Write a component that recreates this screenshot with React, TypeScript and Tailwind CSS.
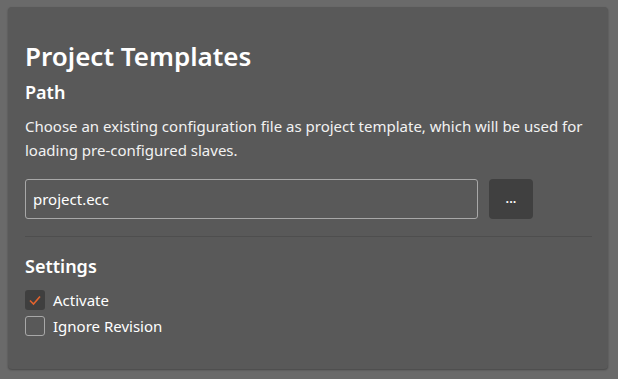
import { useState } from "react";

export default function App() {
  const [active, setActive] = useState(true);
  const [ignoreRev, setIgnoreRev] = useState(false);

  return (
    <main
      className="w-[618px] h-[379px] bg-[#6a6a6a] pt-[7px] px-[8px] text-white"
      style={{ fontFamily: '"Noto Sans", "Open Sans", sans-serif' }}
    >
      <div className="w-[600px] h-[362px] rounded-[4px] bg-[#595959] shadow-[0_1px_2px_rgba(0,0,0,0.35)] pl-[17px] pr-[16px] pt-[31px]">
        <h1 className="text-[26px] leading-[36px] font-semibold">Project Templates</h1>
        <h2 className="text-[18px] leading-[26px] font-semibold mt-[5px]">Path</h2>
        <p className="text-[15px] leading-[24px] mt-[9px] text-[#f2f2f2]">
          Choose an existing configuration file as project template, which will be used for loading pre-configured slaves.
        </p>

        <div className="flex gap-[11px] mt-[17px]">
          <input
            defaultValue="project.ecc"
            className="w-[453px] h-[40px] rounded-[3px] border border-[#a8a8a8] bg-transparent px-[7px] text-[15px] text-white outline-none"
          />
          <button className="w-[44px] h-[40px] rounded-[4px] bg-[#404040] text-[13px] font-semibold">...</button>
        </div>

        <div className="h-px bg-[#4e4e4e] mt-[17px]" />

        <h2 className="text-[18px] leading-[26px] font-semibold mt-[16px]">Settings</h2>
        <div className="flex flex-col gap-[6px] mt-[11px]">
          <label className="flex items-center gap-[8px] text-[15px] leading-[20px]">
            <button
              onClick={() => setActive(!active)}
              className="w-[20px] h-[20px] rounded-[3px] bg-[#3f3f3f] flex items-center justify-center"
            >
              {active && (
                <svg width="14" height="14" viewBox="0 0 14 14" fill="none">
                  <path d="M2 7.5 L5.5 11 L12 3.5" stroke="#e2632e" strokeWidth="1.6" />
                </svg>
              )}
            </button>
            Activate
          </label>
          <label className="flex items-center gap-[8px] text-[15px] leading-[20px]">
            <button
              onClick={() => setIgnoreRev(!ignoreRev)}
              className="w-[20px] h-[20px] rounded-[3px] border border-[#a8a8a8] flex items-center justify-center"
            >
              {ignoreRev && (
                <svg width="14" height="14" viewBox="0 0 14 14" fill="none">
                  <path d="M2 7.5 L5.5 11 L12 3.5" stroke="#e2632e" strokeWidth="1.6" />
                </svg>
              )}
            </button>
            Ignore Revision
          </label>
        </div>
      </div>
    </main>
  );
}
